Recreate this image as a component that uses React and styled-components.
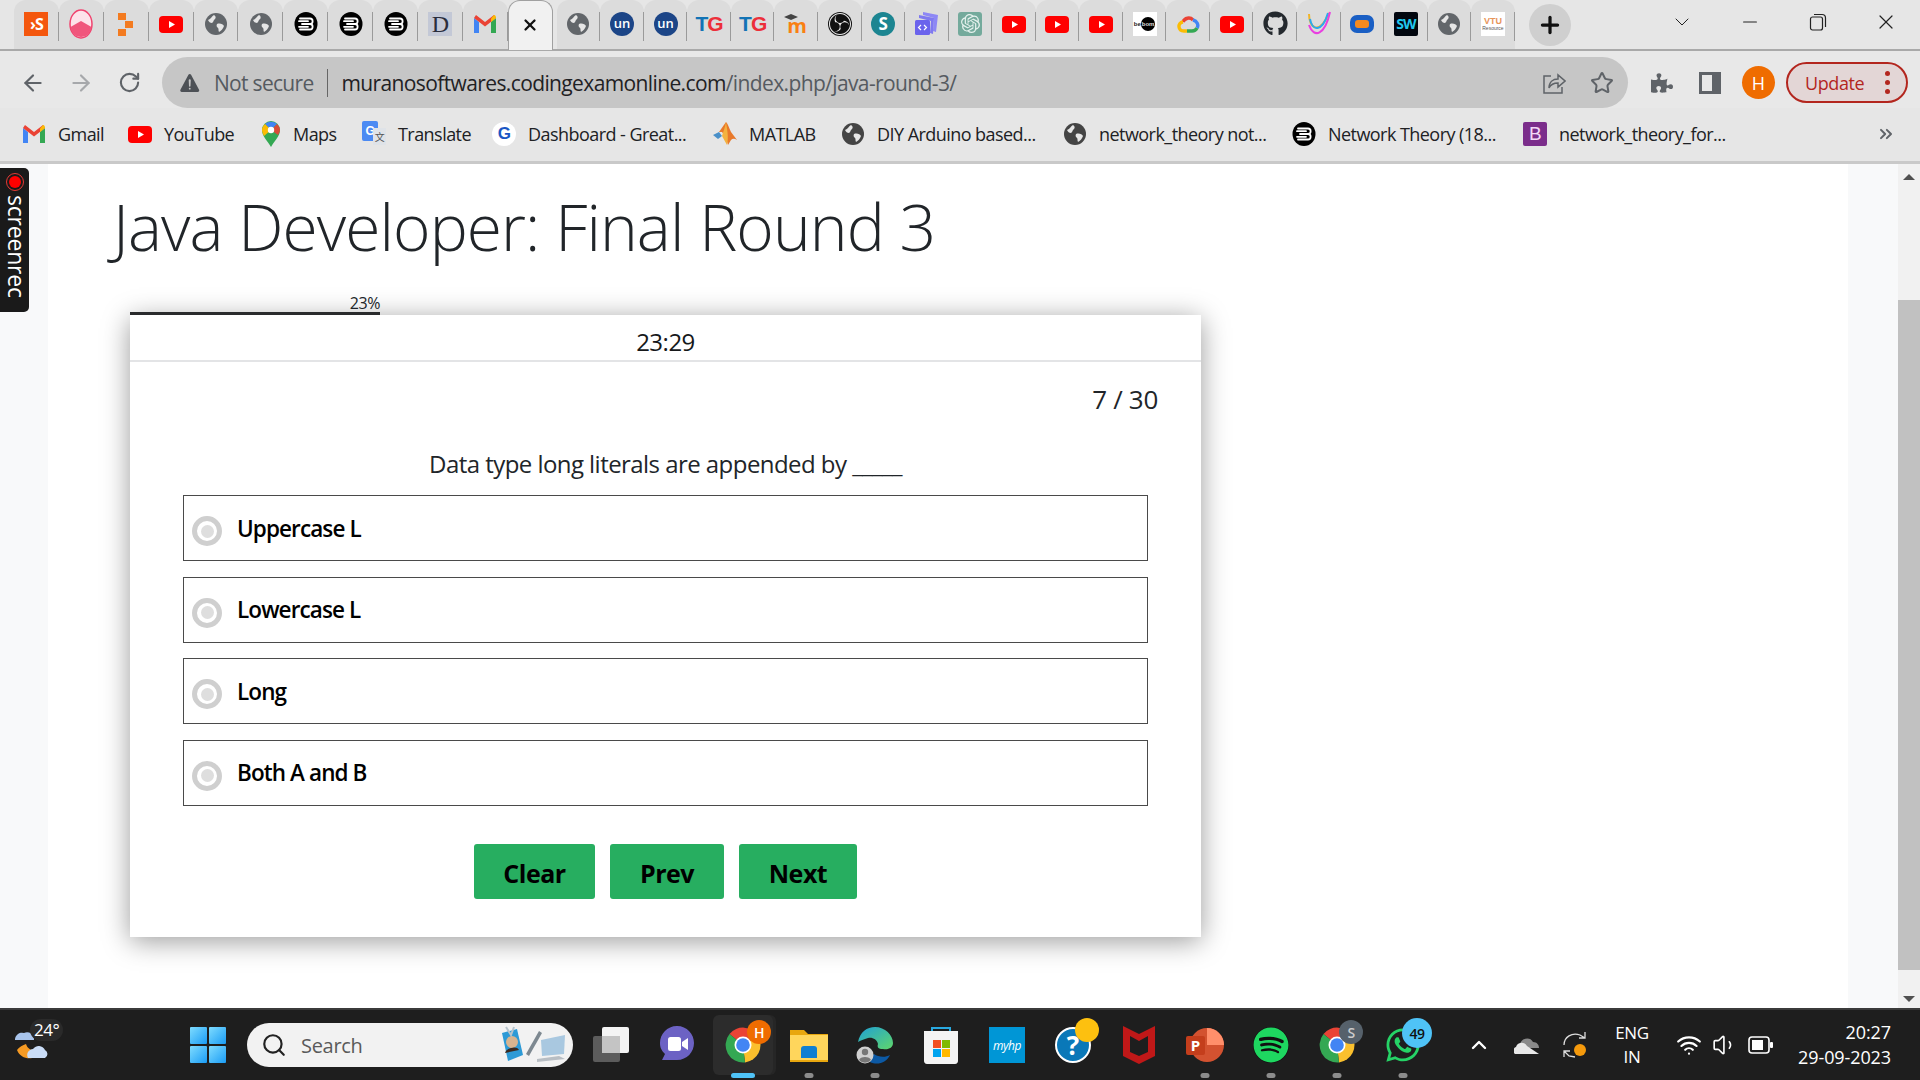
import React from "react";
import styled, { createGlobalStyle } from "styled-components";
import {
  ArrowLeft,
  ArrowRight,
  RotateCw,
  Star,
  X,
  Minus,
  ChevronDown,
  ChevronUp,
  ChevronsRight,
  Plus,
  Search,
  Wifi,
  Volume1,
} from "lucide-react";
import { FaPuzzlePiece, FaGithub, FaWhatsapp, FaSpotify } from "react-icons/fa";
import { SiObsstudio, SiOpenai } from "react-icons/si";
import { IoWarning } from "react-icons/io5";

const sans = `"Open Sans", "Noto Sans", sans-serif`;

const GlobalStyle = createGlobalStyle`
  html, body { margin: 0; padding: 0; overflow: hidden; }
  body { font-family: ${sans}; background: #fff; }
  * { box-sizing: border-box; }
`;

const Shell = styled.div`
  width: 1920px;
  height: 1080px;
  display: flex;
  flex-direction: column;
  position: relative;
  overflow: hidden;
`;

/* ---------- favicons ---------- */

const GlyphBox = styled.span`
  width: ${(p) => p.$size || 24}px;
  height: ${(p) => p.$size || 24}px;
  display: flex;
  align-items: center;
  justify-content: center;
  flex: none;
  font-family: ${(p) => p.$font || sans};
  font-weight: ${(p) => p.$weight || 700};
  font-size: ${(p) => p.$text || 14}px;
  letter-spacing: ${(p) => p.$track || 0}px;
  color: ${(p) => p.$color || "#fff"};
  background: ${(p) => p.$bg || "transparent"};
  border-radius: ${(p) => p.$radius || 0};
  line-height: 1;
  white-space: nowrap;
`;

const Youtube = ({ size = 24 }) => (
  <svg width={size} height={size} viewBox="0 0 24 24">
    <rect x="0" y="4" width="24" height="17" rx="4" fill="#f00" />
    <path d="M10 9l6 3.5-6 3.5z" fill="#fff" />
  </svg>
);

const Globe = ({ size = 24, color = "#62666a" }) => (
  <svg width={size} height={size} viewBox="0 0 24 24">
    <circle cx="12" cy="12" r="11" fill={color} />
    <path d="M4 8c3-1 4-4 6-5 2 1 2 3 1 4-2 1-1 3-3 4-2 0-3-1-4-3z" fill="#e6e6e6" />
    <path d="M13 12c3-1 6 0 7 2-1 3-3 5-5 6-1-2 0-3-1-4-1-1-2-2-1-4z" fill="#e6e6e6" />
  </svg>
);

const Bee = ({ size = 24 }) => (
  <svg width={size} height={size} viewBox="0 0 24 24">
    <ellipse cx="12" cy="12" rx="11.5" ry="12" fill="#000" />
    <path
      d="M6 6.500h10c3.500 0 3.500 5.500 0 5.500H8m8 0c3.500 0 3.500 5.500 0 5.500H6M5 9.200h9M5 14.800h9"
      stroke="#fff"
      strokeWidth="1.800"
      strokeLinecap="round"
      fill="none"
    />
  </svg>
);

const Gmail = ({ size = 24 }) => (
  <svg width={size} height={size} viewBox="0 0 24 24">
    <path d="M1 6v15h5V10z" fill="#4285f4" />
    <path d="M23 6v15h-5V10z" fill="#34a853" />
    <path d="M1 6l11 8.500L23 6l-2-3-9 7-9-7z" fill="#ea4335" />
    <path d="M18 6.500L21 3c1.500 0 2 1.500 2 3l-5 4z" fill="#fbbc04" />
  </svg>
);

const GoogleCloud = () => (
  <svg width="24" height="24" viewBox="0 0 24 24" fill="none" strokeWidth="3.400">
    <path d="M7 10a6 6 0 0 1 10-2" stroke="#ea4335" />
    <path d="M17 8c4 1 6 5 4 8" stroke="#4285f4" />
    <path d="M21 16c-1 2-2 3-5 3H11" stroke="#34a853" />
    <path d="M11 19H8c-6 0-7-8-1-9" stroke="#fbbc04" />
  </svg>
);

const Rainbow = () => (
  <svg width="24" height="26" viewBox="0 0 24 26" fill="none" strokeWidth="2">
    <path d="M2 3c0 14 10 22 20-1" stroke="#f0b429" />
    <path d="M3 8c2 12 12 14 18-6" stroke="#29a9f0" />
    <path d="M2 14c5 14 16 10 21-13" stroke="#e93fe0" />
  </svg>
);

const Moodle = () => (
  <svg width="26" height="24" viewBox="0 0 26 24">
    <path d="M1 5l7-3 7 3-7 3z" fill="#444" />
    <text x="14" y="21" fontSize="20" fontWeight="700" fill="#f98012" textAnchor="middle" fontFamily="Open Sans">
      m
    </text>
  </svg>
);

const StackIcon = () => (
  <svg width="24" height="26" viewBox="0 0 24 26">
    <path d="M8 1l15 3-2 17-3-1 1-13L8 4z" fill="#8d87f5" />
    <path d="M4 4l15 3-1 16-3-1 1-12L4 7z" fill="#7f79f0" />
    <rect x="0" y="9" width="15" height="15" rx="1.500" fill="#6b63ec" />
    <path d="M6 14l-2.500 2.500L6 19M9 14l2.500 2.500L9 19" stroke="#fff" strokeWidth="1.200" fill="none" />
  </svg>
);

const favicons = {
  shape: () => (
    <GlyphBox $bg="#f4570e" $text={16} $track={-1}>
      ›S
    </GlyphBox>
  ),
  pink: () => (
    <svg width="24" height="30" viewBox="0 0 24 30">
      <ellipse cx="12" cy="15" rx="11" ry="14" fill="#fde3ea" stroke="#f0446f" strokeWidth="1.500" />
      <path d="M1.500 18l10.500-6 10.500 6c-1 7-6 10-10.500 10S2.500 25 1.500 18z" fill="#f0567c" />
    </svg>
  ),
  blocks: () => (
    <svg width="24" height="24" viewBox="0 0 24 24" fill="#f37b20">
      <rect x="4" y="1" width="8" height="7" />
      <rect x="11" y="9" width="8" height="7" />
      <rect x="4" y="17" width="8" height="7" />
    </svg>
  ),
  youtube: () => <Youtube />,
  globe: () => <Globe />,
  bee: () => <Bee />,
  serif: () => (
    <GlyphBox $bg="#c3c8d6" $color="#2a2d3c" $text={24} $weight={400} $font={`"Liberation Serif", serif`}>
      D
    </GlyphBox>
  ),
  gmail: () => <Gmail />,
  close: () => <X size={18} strokeWidth={3} color="#111" />,
  un: () => (
    <GlyphBox $bg="#1c4587" $text={13} $radius="50%" $weight={600}>
      un
    </GlyphBox>
  ),
  tg: () => (
    <GlyphBox $text={21} $weight={700} $track={-1} $font={`"Liberation Sans Narrow", "Liberation Sans", sans-serif`} $color="#1273b5">
      T<ColoredLetter $color="#ec2f3a">G</ColoredLetter>
    </GlyphBox>
  ),
  moodle: () => <Moodle />,
  obs: () => (
    <GlyphBox $bg="#111" $radius="50%">
      <SiObsstudio size={22} color="#eee" />
    </GlyphBox>
  ),
  teal: () => (
    <GlyphBox $bg="#1c8591" $text={17} $radius="50%">
      S
    </GlyphBox>
  ),
  stack: () => <StackIcon />,
  gpt: () => (
    <GlyphBox $bg="#74aa9c" $radius="3px">
      <SiOpenai size={19} color="#e6f2ee" />
    </GlyphBox>
  ),
  beebom: () => (
    <GlyphBox $bg="#fff" $color="#222" $text={6} $font={`"Liberation Sans", sans-serif`}>
      be<BlackDot>bom</BlackDot>
    </GlyphBox>
  ),
  cloud: () => <GoogleCloud />,
  github: () => <FaGithub size={25} color="#24292e" />,
  rainbow: () => <Rainbow />,
  pill: () => (
    <svg width="24" height="20" viewBox="0 0 24 20">
      <rect x="0" y="1" width="24" height="18" rx="7" fill="#1a5fc4" />
      <rect x="5" y="6" width="14" height="8" rx="3" fill="#f58a1f" />
    </svg>
  ),
  sw: () => (
    <GlyphBox $bg="#02070f" $color="#20c7ee" $text={14} $track={-1} $radius="2px">
      SW
    </GlyphBox>
  ),
  vtu: () => (
    <VtuBox>
      <span>VTU</span>
      <small>Resource</small>
    </VtuBox>
  ),
};

const ColoredLetter = styled.span`
  color: ${(p) => p.$color};
`;

const BlackDot = styled.span`
  background: #000;
  color: #ddd;
  border-radius: 50%;
  padding: 4px 1px;
`;

const VtuBox = styled.span`
  width: 24px;
  height: 24px;
  background: #fff;
  display: flex;
  flex-direction: column;
  align-items: center;
  justify-content: center;
  font-family: "Liberation Sans", sans-serif;
  line-height: 1;
  color: #e8955a;
  font-size: 9px;
  font-weight: 700;

  small {
    font-size: 5px;
    color: #555;
    font-weight: 400;
  }
`;

/* ---------- tab strip ---------- */

const TabStrip = styled.div`
  height: 51px;
  flex: none;
  display: flex;
  align-items: stretch;
  padding-left: 14px;
  background: #e6e6e6;
  border-bottom: 2px solid #a9a9a9;
`;

const Tab = styled.div`
  width: ${(p) => p.$w}px;
  flex: none;
  display: flex;
  align-items: center;
  justify-content: center;
  position: relative;
  height: ${(p) => (p.$active ? "50px" : "49px")};
  margin-right: ${(p) => (p.$active ? "4px" : "0")};
  background: ${(p) => (p.$active ? "#f1f1f1" : "#dcdcdc")};
  border-radius: 12px 12px 0 0;
  border: ${(p) => (p.$active ? "1px solid #a0a0a0" : "none")};
  border-bottom: none;
  padding-bottom: 2px;
  z-index: ${(p) => (p.$active ? 1 : 0)};

  &::after {
    content: "";
    display: ${(p) => (p.$active ? "none" : "block")};
    position: absolute;
    right: 0;
    top: 12px;
    height: 29px;
    width: 1px;
    background: #9a9a9a;
  }
`;

const NewTab = styled.button`
  width: 42px;
  height: 42px;
  margin: 4px 0 0 14px;
  border: none;
  padding: 0;
  border-radius: 50%;
  background: #cfcfcf;
  display: flex;
  align-items: center;
  justify-content: center;
`;

const WindowControls = styled.div`
  margin-left: auto;
  display: flex;
  align-items: flex-start;
`;

const WindowButton = styled.div`
  width: 68px;
  height: 44px;
  display: flex;
  align-items: center;
  justify-content: center;
`;

const RestoreIcon = () => (
  <svg width="18" height="18" viewBox="0 0 18 18" fill="none" stroke="#222" strokeWidth="1.200">
    <rect x="1.500" y="4" width="12" height="13" rx="2" />
    <path d="M5 1.500h8c2 0 3.500 1.500 3.500 3.500v9" />
  </svg>
);

/* ---------- toolbar ---------- */

const Toolbar = styled.div`
  height: 57px;
  flex: none;
  background: #e8e8e8;
  display: flex;
  align-items: flex-start;
  padding-top: 6px;
`;

const NavButton = styled.div`
  width: 48px;
  height: 51px;
  display: flex;
  align-items: center;
  justify-content: center;
  flex: none;
  color: ${(p) => p.$color || "#5f6368"};
`;

const NavGroup = styled.div`
  display: flex;
  padding-left: 9px;
  width: 162px;
  flex: none;
`;

const Omnibox = styled.div`
  width: 1466px;
  height: 51px;
  flex: none;
  border-radius: 26px;
  background: #c6c6c6;
  display: flex;
  align-items: center;
  padding: 0 2px 0 16px;
  font-size: 21px;
  color: #555a60;
`;

const NotSecure = styled.span`
  margin-left: 12px;
  letter-spacing: -0.7px;
`;

const UrlDivider = styled.span`
  width: 1px;
  height: 28px;
  background: #666;
  margin: 0 14px 0 13px;
`;

const Url = styled.span`
  letter-spacing: -0.62px;
  white-space: nowrap;
  b {
    font-weight: 400;
    color: #1f2124;
  }
`;

const OmniActions = styled.div`
  margin-left: auto;
  display: flex;
`;

const ToolbarRight = styled.div`
  display: flex;
  align-items: center;
  height: 51px;
  padding-left: 10px;
`;

const SidePanelIcon = () => (
  <svg width="22" height="22" viewBox="0 0 22 22">
    <path d="M0 0h22v22H0zM3 3v16h10V3z" fill="#5f6368" fillRule="evenodd" />
  </svg>
);

const ShareIcon = () => (
  <svg width="24" height="24" viewBox="0 0 24 24" fill="none" stroke="#5f6368" strokeWidth="1.500">
    <path d="M9 5H2v17h18v-6" />
    <path d="M7 17c0-6 4-9 9-9V4l7 6-7 6v-4c-4 0-7 1-9 5z" />
  </svg>
);

const Avatar = styled.div`
  width: 33px;
  height: 33px;
  border-radius: 50%;
  background: #ef6c00;
  color: #fff;
  font-size: 18px;
  display: flex;
  align-items: center;
  justify-content: center;
  margin-left: 8px;
`;

const UpdatePill = styled.div`
  width: 122px;
  height: 41px;
  margin-left: 11px;
  border: 2px solid #b3261e;
  border-radius: 21px;
  background: #e3d6d6;
  color: #b3261e;
  display: flex;
  align-items: center;
  justify-content: space-between;
  padding: 0 16px 0 17px;
  font-size: 18px;
  letter-spacing: -0.4px;
`;

const MenuDots = styled.span`
  display: flex;
  flex-direction: column;
  gap: 4px;

  i {
    width: 5px;
    height: 5px;
    border-radius: 50%;
    background: #b3261e;
  }
`;

/* ---------- bookmarks ---------- */

const BookmarkBar = styled.div`
  height: 56px;
  flex: none;
  background: #e6e6e6;
  border-bottom: 3px solid #c9c9c9;
  display: flex;
  align-items: center;
  padding: 1px 0 2px 22px;
`;

const Bookmark = styled.div`
  width: ${(p) => p.$w}px;
  flex: none;
  display: flex;
  align-items: center;
  gap: 12px;
  font-size: 18px;
  letter-spacing: -0.55px;
  color: #202124;
  white-space: nowrap;
`;

const MoreBookmarks = styled.div`
  margin-left: auto;
  margin-right: 24px;
  display: flex;
  color: #5f6368;
`;

const MapsPin = () => (
  <svg width="20" height="28" viewBox="2 0 20 28">
    <path d="M12 27C8 20 3 16 3 10a9 9 0 0 1 18 0c0 6-5 10-9 17z" fill="#34a853" />
    <path d="M6 4a9 9 0 0 1 12 0l-6 6z" fill="#4285f4" />
    <path d="M3 10c0-2 1-4 3-6l6 6-7 6c-1-2-2-4-2-6z" fill="#fbbc04" />
    <path d="M18 4c2 2 3 4 3 6 0 2-1 3-2 5l-7-5z" fill="#ea4335" opacity="0.9" />
    <circle cx="12" cy="10" r="3.200" fill="#fff" />
  </svg>
);

const TranslateIcon = styled.span`
  width: 24px;
  height: 26px;
  position: relative;
  display: flex;
  font-family: "Liberation Sans", sans-serif;
  font-size: 12px;
  font-weight: 700;
  color: #fff;
  flex: none;

  &::before {
    content: "G";
    width: 16px;
    height: 20px;
    background: #4b8af3;
    border-radius: 2px;
    display: flex;
    align-items: center;
    justify-content: center;
  }
  &::after {
    content: "文";
    position: absolute;
    left: 11px;
    top: 7px;
    width: 13px;
    height: 17px;
    font-size: 10px;
    font-family: "Noto Sans CJK SC", sans-serif;
    font-weight: 400;
    color: #555;
    background: #dfe3e8;
    display: flex;
    align-items: center;
    justify-content: center;
  }
`;

const GreatIcon = styled.span`
  width: 24px;
  height: 24px;
  border-radius: 50%;
  background: #fff;
  color: #1a56c4;
  font-family: "Liberation Sans", sans-serif;
  font-size: 17px;
  font-weight: 700;
  display: flex;
  align-items: center;
  justify-content: center;
  flex: none;
`;

const Matlab = () => (
  <svg width="24" height="26" viewBox="0 0 24 26">
    <path d="M0 14l6-3 3 4-4 3z" fill="#4a90c8" />
    <path d="M6 11l7-10c2 2 3 6 5 10l6 8c-2-1-4-2-6 0l-3 5c-1-5-3-9-6-13z" fill="#e8792b" />
    <path d="M13 1c-1 6-3 10-4 14l5 9c2-8 0-16-1-23z" fill="#f4b23f" />
  </svg>
);

const BytesIcon = styled.span`
  width: 24px;
  height: 24px;
  background: #7b2d8b;
  border-radius: 2px;
  color: #f3d9f7;
  font-family: "Liberation Sans", sans-serif;
  font-size: 19px;
  display: flex;
  align-items: center;
  justify-content: center;
  flex: none;
`;

/* ---------- page ---------- */

const Viewport = styled.div`
  flex: 1;
  min-height: 0;
  display: flex;
  background: #f8f9fa;
`;

const Page = styled.main`
  margin-left: 48px;
  width: 1800px;
  flex: none;
  background: #fff;
  padding: 25px 0 0 0;
`;

const Title = styled.h1`
  margin: 0 0 0 65px;
  font-size: 64px;
  line-height: 76px;
  font-weight: 300;
  color: #212529;
  letter-spacing: -0.9px;
  white-space: nowrap;
`;

const ProgressBlock = styled.div`
  width: 250px;
  margin: 30px 0 0 82px;
  position: relative;
  z-index: 1;
`;

const ProgressLabel = styled.div`
  font-size: 16px;
  line-height: 17px;
  text-align: right;
  color: #212529;
  letter-spacing: -0.4px;
`;

const ProgressBar = styled.div`
  height: 3px;
  background: #2a2b2d;
`;

const Card = styled.section`
  width: 1071px;
  margin-left: 82px;
  background: #fff;
  box-shadow: 0 4px 26px rgba(0, 0, 0, 0.4);
  padding-bottom: 38px;
`;

const CardHeader = styled.div`
  height: 47px;
  border-bottom: 2px solid #e3e4e6;
  display: flex;
  align-items: center;
  justify-content: center;
  font-size: 24px;
  color: #16181a;
  padding-top: 8px;
  letter-spacing: -0.5px;
`;

const Counter = styled.div`
  margin-top: 22px;
  padding-right: 43px;
  text-align: right;
  font-size: 26px;
  line-height: 30px;
  color: #212529;
  letter-spacing: -0.3px;
`;

const Question = styled.p`
  margin: 35px 0 0;
  text-align: center;
  font-size: 24px;
  line-height: 30px;
  color: #212529;
  letter-spacing: -0.55px;
`;

const Options = styled.div`
  margin: 16px 0 0 53px;
  width: 965px;
  display: flex;
  flex-direction: column;
  gap: 15.67px;
`;

const Option = styled.label`
  height: 66px;
  border: 1.5px solid #4a4a4a;
  display: flex;
  align-items: center;
  padding-left: 8px;
`;

const Radio = styled.span`
  width: 30px;
  height: 30px;
  border: 5px solid #cfcfcf;
  border-radius: 50%;
  margin-top: 6px;
  display: flex;
  align-items: center;
  justify-content: center;

  &::before {
    content: "";
    width: 13px;
    height: 13px;
    border-radius: 50%;
    background: #dedede;
  }
`;

const OptionText = styled.span`
  margin-left: 15px;
  font-size: 22.5px;
  font-weight: 600;
  color: #000;
  letter-spacing: -0.9px;
`;

const Actions = styled.div`
  margin-top: 38px;
  display: flex;
  justify-content: center;
  gap: 15px;
`;

const ActionButton = styled.button`
  width: ${(p) => p.$w}px;
  height: 55px;
  border: none;
  border-radius: 3px;
  background: #27ae60;
  color: #000;
  font-family: ${sans};
  font-size: 25px;
  font-weight: 700;
  letter-spacing: -0.5px;
  padding: 4px 0 0;
`;

const RightScroll = styled.div`
  margin-left: 50px;
  width: 22px;
  flex: none;
  background: #f1f1f1;
  display: flex;
  flex-direction: column;
  align-items: center;
  padding: 0 0 6px;
`;

const ScrollArrow = styled.div`
  width: 0;
  height: 0;
  margin-top: ${(p) => (p.$down ? "auto" : "10px")};
  border-left: 6px solid transparent;
  border-right: 6px solid transparent;
  ${(p) => (p.$down ? "border-top: 6px solid #505050;" : "border-bottom: 6px solid #505050;")}
`;

const ScrollThumb = styled.div`
  width: 100%;
  height: 670px;
  margin-top: 120px;
  background: #c1c1c1;
`;

const RecWidget = styled.div`
  position: absolute;
  left: 0;
  top: 168px;
  width: 29px;
  height: 144px;
  background: #1a1a1a;
  border-radius: 0 5px 5px 0;
  display: flex;
  flex-direction: column;
  align-items: center;
  padding-top: 7px;
  z-index: 3;
`;

const RecDot = styled.span`
  width: 12px;
  height: 12px;
  flex: none;
  margin-top: 1px;
  border-radius: 50%;
  background: #f00;
  outline: 1px solid #e53935;
  outline-offset: 2px;
`;

const RecLabel = styled.span`
  writing-mode: vertical-rl;
  color: #fff;
  font-size: 23px;
  line-height: 27px;
  margin: 7px 0 0 3px;
  letter-spacing: -0.2px;
`;

/* ---------- taskbar ---------- */

const Taskbar = styled.footer`
  height: 72px;
  flex: none;
  background: #1e1e1e;
  border-top: 2px solid #3b3b3b;
  display: flex;
  align-items: center;
  color: #fff;
`;

const Weather = styled.div`
  width: 190px;
  flex: none;
  height: 100%;
  position: relative;
  display: flex;
  align-items: center;
`;

const Temperature = styled.span`
  position: absolute;
  left: 30px;
  top: 9px;
  background: #2a2a2a;
  border-radius: 12px;
  padding: 0 4px;
  font-size: 17px;
  line-height: 22px;
  letter-spacing: -0.5px;
`;

const WeatherIcon = () => (
  <svg width="36" height="44" viewBox="0 0 36 44">
    <path d="M1 17a7 7 0 0 1 9-7 7 7 0 0 1 10 7z" fill="#a8c4ec" />
    <path d="M3 27c3 8 12 10 18 7 4-2 6-4 7-8-6 3-14 2-16-5-3 1-7 3-9 6z" fill="#f59a23" />
    <path d="M14 35a6 6 0 0 1 5-9 7 7 0 0 1 12 1 4.500 4.500 0 0 1 0 8z" fill="#c9dcf6" />
  </svg>
);

const WindowsLogo = styled.div`
  width: 36px;
  height: 36px;
  flex: none;
  display: grid;
  grid-template-columns: 1fr 1fr;
  gap: 2px;

  i {
    background: linear-gradient(135deg, #7fdcff, #1a9cf5);
    border-radius: 1px;
  }
`;

const SearchBox = styled.div`
  width: 326px;
  height: 44px;
  flex: none;
  margin-left: 21px;
  border-radius: 22px;
  background: #f2f2f2;
  display: flex;
  align-items: center;
  padding: 0 6px 0 14px;
  color: #5a5a5a;
  font-size: 20px;
`;

const SearchLabel = styled.span`
  margin-left: 14px;
  letter-spacing: -0.3px;
`;

const SearchArt = styled.span`
  margin-left: auto;
  display: flex;
`;

const SearchIllustration = () => (
  <svg width="68" height="40" viewBox="0 0 68 40">
    <path d="M3 8l15-4 6 26-15 6z" fill="#2d9ad6" />
    <circle cx="13" cy="17" r="6" fill="#d8b48f" />
    <path d="M6 28c1-5 12-8 14-3z" fill="#3b2a20" />
    <path d="M7 2l5 8 3-8" stroke="#b8c4cc" strokeWidth="2" fill="none" />
    <path d="M27 29L40 6l3 2-13 23z" fill="#7d8890" />
    <path d="M42 15l24-5-1 19-22 2z" fill="#a9c8e0" />
    <path d="M38 37l28-3-6-3-22 3z" fill="#b8bec4" />
  </svg>
);

const Slots = styled.div`
  display: flex;
  margin-left: 5px;
  flex: none;
`;

const Slot = styled.div`
  width: 66px;
  height: 70px;
  flex: none;
  display: flex;
  align-items: center;
  justify-content: center;
  position: relative;

  &::before {
    content: "";
    display: ${(p) => (p.$active ? "block" : "none")};
    position: absolute;
    left: 3px;
    top: 5px;
    width: 60px;
    height: 60px;
    border-radius: 6px;
    background: #2c2c2c;
    box-shadow: 3px 0 0 #262626;
  }

  &::after {
    content: "";
    display: ${(p) => (p.$run ? "block" : "none")};
    position: absolute;
    bottom: 2px;
    left: 50%;
    transform: translateX(-50%);
    height: 5px;
    border-radius: 3px;
    width: ${(p) => (p.$active ? "24px" : "9px")};
    background: ${(p) => (p.$active ? "#4fc3f7" : "#8c8c8c")};
  }

  > * {
    position: relative;
  }
`;

const Badge = styled.span`
  && {
    position: absolute;
  }
  width: ${(p) => p.$size || 24}px;
  height: ${(p) => p.$size || 24}px;
  right: ${(p) => p.$right || 4}px;
  top: ${(p) => p.$top || 8}px;
  border-radius: 50%;
  background: ${(p) => p.$bg};
  color: ${(p) => p.$color || "#fff"};
  font-size: 14px;
  font-weight: 600;
  display: flex;
  align-items: center;
  justify-content: center;
  letter-spacing: -0.5px;
`;

const ChromeLogo = ({ size = 36 }) => (
  <svg width={size} height={size} viewBox="0 0 36 36">
    <path d="M18 18L4.500 7A17.500 17.500 0 0 1 33 9z" fill="#ea4335" />
    <path d="M18 18L33 9a17.500 17.500 0 0 1-13 26.400z" fill="#fbc02d" />
    <path d="M18 18l2 17.400A17.500 17.500 0 0 1 4.500 7z" fill="#34a853" />
    <circle cx="18" cy="18" r="8.500" fill="#fff" />
    <circle cx="18" cy="18" r="6.800" fill="#4285f4" />
  </svg>
);

const TaskViewIcon = () => (
  <svg width="38" height="38" viewBox="0 0 38 38">
    <rect x="1" y="10" width="27" height="26" rx="2" fill="#5c5c5c" />
    <rect x="10" y="1" width="27" height="26" rx="2" fill="#f4f4f4" />
    <rect x="10" y="10" width="18" height="17" fill="#c4c4c4" />
  </svg>
);

const TeamsIcon = () => (
  <svg width="36" height="40" viewBox="0 0 36 40">
    <path d="M18 1c10 0 17 8 17 17s-7 17-17 17H3l3-6C2 25 1 22 1 18 1 9 8 1 18 1z" fill="#6c62c4" />
    <rect x="9" y="12" width="13" height="14" rx="2.500" fill="#fff" />
    <path d="M23 17l6-4v12l-6-4z" fill="#fff" />
  </svg>
);

const FolderIcon = () => (
  <svg width="38" height="36" viewBox="0 0 38 36">
    <path d="M0 3h14l4 4h20v28H0z" fill="#e8a70f" />
    <rect x="0" y="8" width="38" height="25" fill="#ffd65c" />
    <path d="M11 31v-9c0-2 1-3 3-3h10c2 0 3 1 3 3v9z" fill="#0f7fd1" />
  </svg>
);

const EdgeIcon = () => (
  <svg width="38" height="38" viewBox="0 0 38 38">
    <path d="M2 16C4 6 11 1 19 1c10 0 18 8 18 16 0 5-5 7-10 6-5 0-6-2-5-5-1-5-6-7-10-6-4 1-8 3-10 4z" fill="url(#edgeTop)" />
    <path d="M14 36c8 4 17 0 20-7-5 3-12 2-16-1-2 2-4 5-4 8z" fill="#0c59a4" />
    <circle cx="9" cy="29" r="8.500" fill="#d0d0d0" />
    <circle cx="9" cy="26" r="3.200" fill="#777" />
    <path d="M3 34c1-4 11-4 12 0a8 8 0 0 1-12 0z" fill="#777" />
    <defs>
      <linearGradient id="edgeTop" x1="0" y1="0" x2="1" y2="1">
        <stop offset="0" stopColor="#1fa0d6" />
        <stop offset="1" stopColor="#5fd66b" />
      </linearGradient>
    </defs>
  </svg>
);

const StoreIcon = () => (
  <svg width="36" height="38" viewBox="0 0 36 38">
    <path d="M9 6V2h18v4" fill="none" stroke="#29a9e0" strokeWidth="2" />
    <path d="M1 5h34v30c0 1-1 3-3 3H4c-2 0-3-2-3-3z" fill="#f4f4f4" />
    <rect x="10" y="14" width="8" height="8" fill="#f25022" />
    <rect x="19" y="14" width="8" height="8" fill="#7fba00" />
    <rect x="10" y="23" width="8" height="8" fill="#00a4ef" />
    <rect x="19" y="23" width="8" height="8" fill="#ffb900" />
  </svg>
);

const MyHp = styled.span`
  width: 36px;
  height: 36px;
  background: #0096d6;
  color: #fff;
  font-size: 12px;
  font-style: italic;
  display: flex;
  align-items: center;
  justify-content: center;
  letter-spacing: -0.5px;
`;

const HelpIcon = styled.span`
  width: 36px;
  height: 36px;
  border-radius: 50%;
  background: #0a78b8;
  border: 2px solid #fff;
  color: #fff;
  font-size: 26px;
  font-weight: 700;
  display: flex;
  align-items: center;
  justify-content: center;
`;

const McAfee = () => (
  <svg width="32" height="38" viewBox="0 0 32 38">
    <path d="M0 0l16 8 16-8v30l-16 8-16-8zM7 10v16l9 4 9-4V10l-9 5z" fill="#c01818" fillRule="evenodd" />
  </svg>
);

const PowerPoint = () => (
  <svg width="38" height="34" viewBox="0 0 38 34">
    <circle cx="21" cy="17" r="17" fill="#d35230" />
    <path d="M21 0a17 17 0 0 1 17 17H21z" fill="#ff8f6b" />
    <rect x="0" y="8" width="19" height="19" rx="2" fill="#c43e1c" />
    <text x="9.500" y="23" fontSize="15" fontWeight="700" fill="#fff" textAnchor="middle" fontFamily="Open Sans">
      P
    </text>
  </svg>
);

const SpotifyBox = styled.span`
  display: flex;
  color: #1ed760;
  background: #111;
  border-radius: 50%;
`;

const WhatsappBox = styled.span`
  display: flex;
  color: #25d366;
`;

const Tray = styled.div`
  margin-left: 19px;
  display: flex;
  align-items: center;
  flex: 1;
  padding-right: 29px;
`;

const TrayItem = styled.div`
  width: ${(p) => p.$w || 48}px;
  flex: none;
  display: flex;
  align-items: center;
  justify-content: center;
  margin-right: ${(p) => p.$gap || 0}px;
`;

const Lang = styled.div`
  width: 66px;
  margin-right: 6px;
  text-align: center;
  font-size: 17px;
  line-height: 24px;
  letter-spacing: -0.3px;
`;

const Clock = styled.div`
  margin-left: auto;
  text-align: right;
  font-size: 18px;
  line-height: 25px;
  letter-spacing: -0.1px;
`;

const CloudIcon = () => (
  <svg width="26" height="18" viewBox="0 0 26 18">
    <path d="M6 9a7 7 0 0 1 13-3c4 0 6 3 6 6H7z" fill="#8a8a8a" />
    <path d="M1 18a4 4 0 0 1 1-7 6 6 0 0 1 11-1l12 8z" fill="#e8e8e8" />
  </svg>
);

const SyncIcon = () => (
  <svg width="26" height="28" viewBox="0 0 26 28" fill="none" stroke="#ddd" strokeWidth="1.300">
    <path d="M2 14C2 6 10 1 18 4l5 3M23 1v6h-6" />
    <path d="M2 20l5 5 6 1M2 26v-6h6" />
    <circle cx="18" cy="19" r="6" fill="#f59a0c" stroke="none" />
  </svg>
);

const BatteryIcon = () => (
  <svg width="26" height="18" viewBox="0 0 26 18">
    <rect x="1" y="1" width="20" height="16" rx="3" fill="none" stroke="#fff" strokeWidth="1.600" />
    <rect x="4" y="4" width="11" height="10" fill="#fff" />
    <rect x="22" y="6" width="3" height="6" rx="1" fill="#fff" />
  </svg>
);

/* ---------- data ---------- */

const tabs = [
  "shape", "pink", "blocks", "youtube", "globe", "globe", "bee", "bee", "bee", "serif", "gmail", "close",
  "globe", "un", "un", "tg", "tg", "moodle", "obs", "teal", "stack", "gpt", "youtube", "youtube", "youtube",
  "beebom", "cloud", "youtube", "github", "rainbow", "pill", "sw", "globe", "vtu",
];

const bookmarks = [
  { w: 106, icon: <Gmail />, label: "Gmail" },
  { w: 133, icon: <Youtube />, label: "YouTube" },
  { w: 101, icon: <MapsPin />, label: "Maps" },
  { w: 130, icon: <TranslateIcon />, label: "Translate" },
  { w: 221, icon: <GreatIcon>G</GreatIcon>, label: "Dashboard - Great..." },
  { w: 128, icon: <Matlab />, label: "MATLAB" },
  { w: 222, icon: <Globe color="#444" />, label: "DIY Arduino based..." },
  { w: 229, icon: <Globe color="#444" />, label: "network_theory not..." },
  { w: 231, icon: <Bee />, label: "Network Theory (18..." },
  { w: 230, icon: <BytesIcon>B</BytesIcon>, label: "network_theory_for..." },
];

const options = ["Uppercase L", "Lowercase L", "Long", "Both A and B"];

export default function App() {
  return (
    <Shell>
      <GlobalStyle />

      <TabStrip>
        {tabs.map((key, i) => {
          const Favicon = favicons[key];
          return (
            <Tab key={i} $w={i < 12 ? 44.9 : 43.55} $active={key === "close"}>
              <Favicon />
            </Tab>
          );
        })}
        <NewTab>
          <Plus size={26} strokeWidth={3} color="#111" />
        </NewTab>
        <WindowControls>
          <WindowButton>
            <ChevronDown size={24} strokeWidth={1} color="#222" />
          </WindowButton>
          <WindowButton>
            <Minus size={22} strokeWidth={1.2} color="#222" />
          </WindowButton>
          <WindowButton>
            <RestoreIcon />
          </WindowButton>
          <WindowButton>
            <X size={24} strokeWidth={1.2} color="#222" />
          </WindowButton>
        </WindowControls>
      </TabStrip>

      <Toolbar>
        <NavGroup>
          <NavButton>
            <ArrowLeft size={26} strokeWidth={2} />
          </NavButton>
          <NavButton $color="#a6a8ab">
            <ArrowRight size={26} strokeWidth={2} />
          </NavButton>
          <NavButton>
            <RotateCw size={23} strokeWidth={2.2} />
          </NavButton>
        </NavGroup>
        <Omnibox>
          <IoWarning size={24} color="#4d5156" />
          <NotSecure>Not secure</NotSecure>
          <UrlDivider />
          <Url>
            <b>muranosoftwares.codingexamonline.com</b>/index.php/java-round-3/
          </Url>
          <OmniActions>
            <NavButton>
              <ShareIcon />
            </NavButton>
            <NavButton>
              <Star size={24} strokeWidth={2} />
            </NavButton>
          </OmniActions>
        </Omnibox>
        <ToolbarRight>
          <NavButton>
            <FaPuzzlePiece size={22} />
          </NavButton>
          <NavButton>
            <SidePanelIcon />
          </NavButton>
          <Avatar>H</Avatar>
          <UpdatePill>
            Update
            <MenuDots>
              <i />
              <i />
              <i />
            </MenuDots>
          </UpdatePill>
        </ToolbarRight>
      </Toolbar>

      <BookmarkBar>
        {bookmarks.map((b) => (
          <Bookmark key={b.label} $w={b.w}>
            {b.icon}
            {b.label}
          </Bookmark>
        ))}
        <MoreBookmarks>
          <ChevronsRight size={20} strokeWidth={2.4} />
        </MoreBookmarks>
      </BookmarkBar>

      <Viewport>
        <Page>
          <Title>Java Developer: Final Round 3</Title>
          <ProgressBlock>
            <ProgressLabel>23%</ProgressLabel>
            <ProgressBar />
          </ProgressBlock>
          <Card>
            <CardHeader>23:29</CardHeader>
            <Counter>7 / 30</Counter>
            <Question>Data type long literals are appended by _____</Question>
            <Options>
              {options.map((o) => (
                <Option key={o}>
                  <Radio />
                  <OptionText>{o}</OptionText>
                </Option>
              ))}
            </Options>
            <Actions>
              <ActionButton $w={121}>Clear</ActionButton>
              <ActionButton $w={114}>Prev</ActionButton>
              <ActionButton $w={118}>Next</ActionButton>
            </Actions>
          </Card>
        </Page>
        <RightScroll>
          <ScrollArrow />
          <ScrollThumb />
          <ScrollArrow $down />
        </RightScroll>
      </Viewport>

      <RecWidget>
        <RecDot />
        <RecLabel>screenrec</RecLabel>
      </RecWidget>

      <Taskbar>
        <Weather>
          <TrayItem $w={64}>
            <WeatherIcon />
          </TrayItem>
          <Temperature>24°</Temperature>
        </Weather>
        <WindowsLogo>
          <i />
          <i />
          <i />
          <i />
        </WindowsLogo>
        <SearchBox>
          <Search size={26} strokeWidth={2} color="#222" />
          <SearchLabel>Search</SearchLabel>
          <SearchArt>
            <SearchIllustration />
          </SearchArt>
        </SearchBox>
        <Slots>
          <Slot>
            <TaskViewIcon />
          </Slot>
          <Slot>
            <TeamsIcon />
          </Slot>
          <Slot $active $run>
            <ChromeLogo />
            <Badge $bg="#ef6c00" $right={5} $top={10}>
              H
            </Badge>
          </Slot>
          <Slot $run>
            <FolderIcon />
          </Slot>
          <Slot $run>
            <EdgeIcon />
          </Slot>
          <Slot>
            <StoreIcon />
          </Slot>
          <Slot>
            <MyHp>myhp</MyHp>
          </Slot>
          <Slot>
            <HelpIcon>?</HelpIcon>
            <Badge $bg="#fdc00f" $right={7} $top={8} />
          </Slot>
          <Slot>
            <McAfee />
          </Slot>
          <Slot $run>
            <PowerPoint />
          </Slot>
          <Slot $run>
            <SpotifyBox>
              <FaSpotify size={36} />
            </SpotifyBox>
          </Slot>
          <Slot $run>
            <ChromeLogo />
            <Badge $bg="#56616b" $color="#ccc" $right={7} $top={10}>
              S
            </Badge>
          </Slot>
          <Slot $run>
            <WhatsappBox>
              <FaWhatsapp size={38} />
            </WhatsappBox>
            <Badge $bg="#4fc3f7" $color="#111" $size={30} $right={0} $top={8}>
              49
            </Badge>
          </Slot>
        </Slots>
        <Tray>
          <TrayItem>
            <ChevronUp size={24} strokeWidth={2.4} />
          </TrayItem>
          <TrayItem>
            <CloudIcon />
          </TrayItem>
          <TrayItem>
            <SyncIcon />
          </TrayItem>
          <Lang>
            ENG
            <br />
            IN
          </Lang>
          <TrayItem $w={36}>
            <Wifi size={26} strokeWidth={2} />
          </TrayItem>
          <TrayItem $w={36}>
            <Volume1 size={26} strokeWidth={1.5} />
          </TrayItem>
          <TrayItem $w={36}>
            <BatteryIcon />
          </TrayItem>
          <Clock>
            20:27
            <br />
            29-09-2023
          </Clock>
        </Tray>
      </Taskbar>
    </Shell>
  );
}
